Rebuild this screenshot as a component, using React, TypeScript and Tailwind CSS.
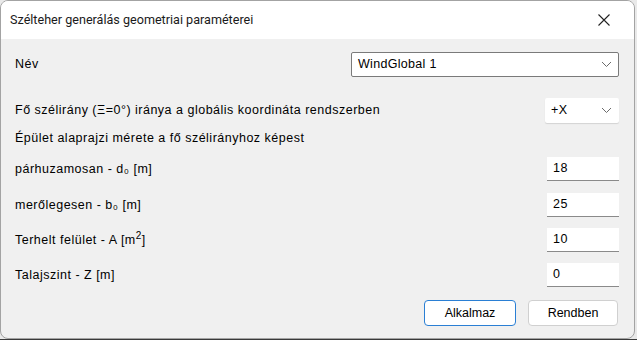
import React from "react"

// Dialog: wind load geometry parameters
const Chevron = () => (
  <svg width="11" height="7" viewBox="0 0 11 7" className="shrink-0">
    <path d="M1 1 L5.5 5.5 L10 1" fill="none" stroke="#6b6b6b" strokeWidth="1" />
  </svg>
)

const fields = [
  { label: <>párhuzamosan - d₀ [m]</>, value: "18", mt: "mt-[9px]" },
  { label: <>merőlegesen - b₀ [m]</>, value: "25", mt: "mt-[12px]" },
  {
    label: (
      <>
        Terhelt felület - A [m<sup className="text-[10px] -top-[5px]">2</sup>]
      </>
    ),
    value: "10",
    mt: "mt-[11px]",
  },
  { label: <>Talajszint - Z [m]</>, value: "0", mt: "mt-[11px]" },
]

export default function App() {
  return (
    <div className="w-[637px] h-[340px] bg-[#e9e9e9] flex flex-col overflow-hidden">
      <div className="w-[635px] h-[339px] rounded-lg border border-[#a3a3a3] bg-[#f0f0f0] overflow-hidden flex flex-col font-['Liberation_Sans',Arial,sans-serif] text-black">
        {/* Title bar */}
        <div className="h-[38px] bg-white flex items-center justify-between pl-[9px] pr-[24px] shrink-0">
          <span className="font-['Roboto',sans-serif] text-[12.6px] text-[#1a1a1a]">
            Szélteher generálás geometriai paraméterei
          </span>
          <svg width="12" height="12" viewBox="0 0 12 12">
            <path d="M0.5 0.5 L11.5 11.5 M11.5 0.5 L0.5 11.5" stroke="#222" strokeWidth="1.1" />
          </svg>
        </div>

        {/* Body */}
        <div className="flex flex-col pl-[14px] pr-[15px] text-[12.5px] tracking-[0.5px]">
          <div className="mt-[13px] h-[25px] flex items-center justify-between">
            <span>Név</span>
            <div className="w-[268px] h-[25px] bg-white border border-[#7a7a7a] rounded-[2px] flex items-center justify-between pl-[6px] pr-[6px] tracking-[0.3px]">
              <span>WindGlobal 1</span>
              <Chevron />
            </div>
          </div>

          <div className="mt-[21px] h-[25px] flex items-center justify-between">
            <span>Fő szélirány (Ξ=0°) iránya a globális koordináta rendszerben</span>
            <div className="w-[74px] h-[25px] bg-white rounded-[2px] shadow-[0_1px_1px_rgba(0,0,0,0.12)] flex items-center justify-between pl-[6px] pr-[7px]">
              <span>+X</span>
              <Chevron />
            </div>
          </div>

          <div className="mt-[5px] h-[20px] flex items-center">
            <span>Épület alaprajzi mérete a fő szélirányhoz képest</span>
          </div>

          {fields.map((f) => (
            <div key={f.value} className={`${f.mt} h-[24px] flex items-center justify-between`}>
              <span>{f.label}</span>
              <div className="w-[72px] h-[24px] bg-white border-b border-[#8a8a8a] flex items-center pl-[6px]">
                {f.value}
              </div>
            </div>
          ))}

          <div className="mt-[13px] flex justify-end gap-[12px] pr-[1px] tracking-normal">
            <button className="w-[92px] h-[26px] bg-white border border-[#2a7fd4] rounded-[4px] text-[12.5px]">
              Alkalmaz
            </button>
            <button className="w-[90px] h-[26px] bg-white border border-[#d0d0d0] rounded-[4px] text-[12.5px]">
              Rendben
            </button>
          </div>
        </div>
      </div>
      <div className="flex-1 bg-[#3a3a3a]" />
    </div>
  )
}
